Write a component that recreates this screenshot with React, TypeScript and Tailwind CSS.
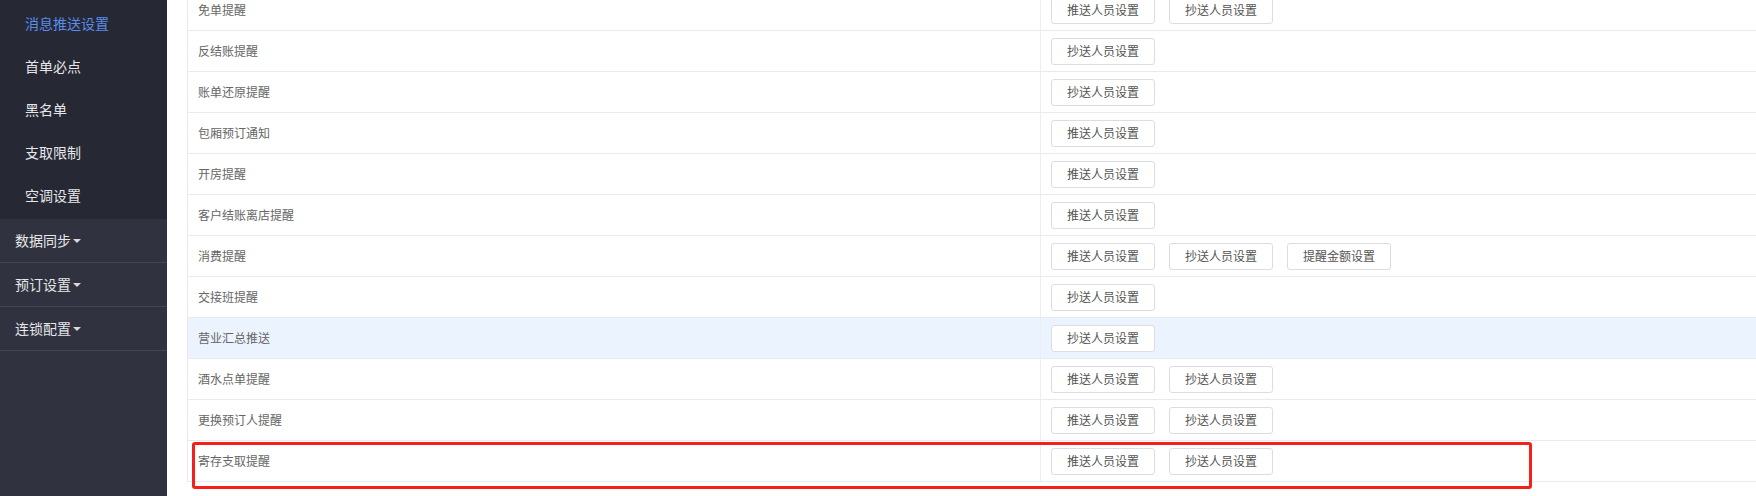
import React from "react";

const font = { fontFamily: '"Microsoft YaHei", "Noto Sans CJK SC", "Noto Sans", sans-serif' };

const subItems = ["消息推送设置", "首单必点", "黑名单", "支取限制", "空调设置"];
const groups = ["数据同步", "预订设置", "连锁配置"];

interface Row {
  name: string;
  buttons: string[];
  active?: boolean;
}

const rows: Row[] = [
  { name: "免单提醒", buttons: ["推送人员设置", "抄送人员设置"] },
  { name: "反结账提醒", buttons: ["抄送人员设置"] },
  { name: "账单还原提醒", buttons: ["抄送人员设置"] },
  { name: "包厢预订通知", buttons: ["推送人员设置"] },
  { name: "开房提醒", buttons: ["推送人员设置"] },
  { name: "客户结账离店提醒", buttons: ["推送人员设置"] },
  { name: "消费提醒", buttons: ["推送人员设置", "抄送人员设置", "提醒金额设置"] },
  { name: "交接班提醒", buttons: ["抄送人员设置"] },
  { name: "营业汇总推送", buttons: ["抄送人员设置"], active: true },
  { name: "酒水点单提醒", buttons: ["推送人员设置", "抄送人员设置"] },
  { name: "更换预订人提醒", buttons: ["推送人员设置", "抄送人员设置"] },
  { name: "寄存支取提醒", buttons: ["推送人员设置", "抄送人员设置"] },
];

function Sidebar() {
  return (
    <div className="flex h-[496px] w-[167px] shrink-0 flex-col bg-[#30333f]">
      <div className="bg-[#262833] pt-[2px] pb-[2px]">
        {subItems.map((item, i) => (
          <div
            key={item}
            className={`flex h-[43px] items-center pl-[25px] text-[14px] ${
              i === 0 ? "text-[#5a8cf0]" : "text-[#e6e7ea]"
            }`}
          >
            {item}
          </div>
        ))}
      </div>
      {groups.map((g) => (
        <div
          key={g}
          className="flex h-[44px] items-center border-b border-[#444753] pl-[15px] text-[14px] text-[#e6e7ea]"
        >
          {g}
          <span className="ml-[2px] inline-block h-0 w-0 border-x-[4px] border-t-[4px] border-x-transparent border-t-[#d8d9dd]" />
        </div>
      ))}
    </div>
  );
}

function SettingButton({ label }: { label: string }) {
  return (
    <button className="h-[27px] w-[104px] rounded-[3px] border border-[#dcdde4] bg-white text-[12px] text-[#555]">
      {label}
    </button>
  );
}

function PushTable() {
  return (
    <div className="-mt-[10px] border-l border-[#e8eaf0]">
      {rows.map((row) => (
        <div
          key={row.name}
          className={`flex h-[41px] border-b border-[#e8eaf0] ${row.active ? "bg-[#ebf3fe]" : "bg-white"}`}
        >
          <div className="flex w-[853px] shrink-0 items-center border-r border-[#eceef3] pl-[10px] text-[12px] text-[#666]">
            {row.name}
          </div>
          <div className="flex items-center gap-[14px] pl-[10px]">
            {row.buttons.map((b, i) => (
              <SettingButton key={i} label={b} />
            ))}
          </div>
        </div>
      ))}
    </div>
  );
}

export default function App() {
  return (
    <div className="relative flex h-[496px] w-[1756px] overflow-hidden bg-white" style={font}>
      <Sidebar />
      <div className="flex-1 overflow-hidden pl-[20px]">
        <PushTable />
      </div>
      {/* highlight box drawn over the last row */}
      <div className="pointer-events-none absolute top-[442px] left-[192px] h-[47px] w-[1340px] rounded-[3px] border-[3px] border-[#f5201a]" />
    </div>
  );
}
